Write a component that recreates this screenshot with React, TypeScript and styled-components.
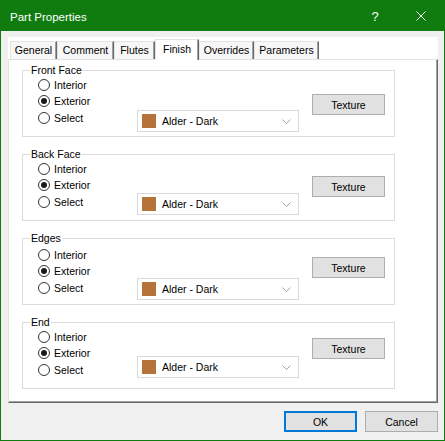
import React from "react";
import styled, { createGlobalStyle } from "styled-components";

const Global = createGlobalStyle`
  html, body { margin: 0; padding: 0; background: #f0f0f0; }
  * { box-sizing: border-box; }
  body { font-family: "Liberation Sans", Arial, sans-serif; }
`;

const GREEN = "#107c10";

const Window = styled.div`
  width: 445px;
  height: 441px;
  border: 1px solid ${GREEN};
  display: flex;
  flex-direction: column;
  background: #f0f0f0;
`;

const TitleBar = styled.div`
  height: 30px;
  background: ${GREEN};
  display: flex;
  align-items: center;
  padding-left: 9px;
  color: #fff;
`;

const TitleText = styled.div`
  flex: 1;
  font-size: 11.5px;
  line-height: 14px;
  margin-top: 1px;
`;

const TitleButton = styled.div`
  width: 46px;
  height: 30px;
  display: flex;
  align-items: center;
  justify-content: center;
  font-size: 13px;
  color: #fff;
`;

const Body = styled.div`
  flex: 1;
  padding: 6px 6px 0 7px;
  display: flex;
  flex-direction: column;
`;

const TabControl = styled.div`
  background: #fff;
  display: flex;
  flex-direction: column;
`;

const TabStrip = styled.div`
  height: 22px;
  padding-left: 2px;
  display: flex;
  align-items: flex-end;
`;

const Tab = styled.div<{ $w: number; $active?: boolean }>`
  width: ${(p) => p.$w}px;
  height: ${(p) => (p.$active ? 21 : 18)}px;
  margin-bottom: ${(p) => (p.$active ? -1 : 0)}px;
  position: relative;
  z-index: ${(p) => (p.$active ? 1 : 0)};
  background: ${(p) => (p.$active ? "#fff" : "#f7f7f7")};
  border-top: 1px solid #e3e3e3;
  border-left: 1px solid #e3e3e3;
  border-right: 1px solid #696969;
  box-shadow: inset -1px 0 0 #a0a0a0;
  font-size: 10.5px;
  color: #000;
  display: flex;
  justify-content: center;
  padding-top: ${(p) => (p.$active ? 3 : 2)}px;
  line-height: 13px;
  white-space: nowrap;
`;

const Panel = styled.div`
  height: 344px;
  border-top: 1px solid #e3e3e3;
  border-left: 1px solid #e3e3e3;
  border-right: 1px solid #696969;
  border-bottom: 1px solid #696969;
  box-shadow: inset -1px -1px 0 #a0a0a0;
  padding: 10px 0 0 13px;
  display: flex;
  flex-direction: column;
  gap: 17px;
`;

const Group = styled.div`
  position: relative;
  width: 373px;
  height: 67px;
  border: 1px solid #dcdcdc;
  display: flex;
`;

const Legend = styled.span`
  position: absolute;
  top: -7px;
  left: 7px;
  padding: 0 1px;
  background: #fff;
  font-size: 10.5px;
  line-height: 13px;
  color: #000;
`;

const RadioList = styled.div<{ $top: number }>`
  width: 114px;
  padding: ${(p) => p.$top}px 0 0 15px;
  display: flex;
  flex-direction: column;
`;

const RadioRow = styled.label`
  height: 16px;
  display: flex;
  align-items: center;
  gap: 4px;
  font-size: 10.5px;
  color: #000;
  &:last-child { margin-top: 1px; }
`;

const RadioCircle = styled.span<{ $checked?: boolean }>`
  width: 12px;
  height: 12px;
  border-radius: 50%;
  border: 1px solid #333;
  background: #fff;
  display: flex;
  align-items: center;
  justify-content: center;
  &::after {
    content: "";
    width: 6px;
    height: 6px;
    border-radius: 50%;
    background: ${(p) => (p.$checked ? "#1a1a1a" : "transparent")};
  }
`;

const ComboCol = styled.div<{ $top: number }>`
  padding-top: ${(p) => p.$top}px;
`;

const Combo = styled.div`
  width: 162px;
  height: 22px;
  border: 1px solid #d9d9d9;
  background: #fff;
  display: flex;
  align-items: center;
  padding: 0 7px 0 4px;
  gap: 6px;
  font-size: 10.5px;
  color: #000;
`;

const Swatch = styled.span<{ $color: string }>`
  width: 14px;
  height: 14px;
  background: ${(p) => p.$color};
  flex: none;
`;

const ComboText = styled.span`
  flex: 1;
`;

const ButtonCol = styled.div<{ $top: number }>`
  padding-top: ${(p) => p.$top}px;
  margin-left: 13px;
`;

const Button = styled.div<{ $default?: boolean }>`
  width: 73px;
  height: 21px;
  background: #e1e1e1;
  border: ${(p) => (p.$default ? "2px solid #0078d7" : "1px solid #adadad")};
  display: flex;
  align-items: center;
  justify-content: center;
  font-size: 10.5px;
  color: #000;
`;

const ButtonBar = styled.div`
  padding-top: 8px;
  display: flex;
  justify-content: flex-end;
  gap: 8px;
`;

const tabs = [
  { label: "General", w: 47 },
  { label: "Comment", w: 57 },
  { label: "Flutes", w: 41 },
  { label: "Finish", w: 44, active: true },
  { label: "Overrides", w: 55 },
  { label: "Parameters", w: 65 },
];

const groups = [
  { title: "Front Face", radio: 6, combo: 39, button: 23 },
  { title: "Back Face", radio: 6, combo: 38, button: 21 },
  { title: "Edges", radio: 8, combo: 39, button: 18 },
  { title: "End", radio: 6, combo: 33, button: 15 },
];

const Chevron = () => (
  <svg width="9" height="5" viewBox="0 0 9 5">
    <polyline points="0.5,0.5 4.5,4.5 8.5,0.5" fill="none" stroke="#a0a0a0" strokeWidth="1" />
  </svg>
);

const CloseIcon = () => (
  <svg width="10" height="10" viewBox="0 0 10 10">
    <path d="M0.5 0.5 L9.5 9.5 M9.5 0.5 L0.5 9.5" stroke="#fff" strokeWidth="1" fill="none" />
  </svg>
);

export default function App() {
  return (
    <>
      <Global />
      <Window>
        <TitleBar>
          <TitleText>Part Properties</TitleText>
          <TitleButton>?</TitleButton>
          <TitleButton>
            <CloseIcon />
          </TitleButton>
        </TitleBar>
        <Body>
          <TabControl>
            <TabStrip>
              {tabs.map((t) => (
                <Tab key={t.label} $w={t.w} $active={t.active}>
                  {t.label}
                </Tab>
              ))}
            </TabStrip>
            <Panel>
              {groups.map((g) => (
                <Group key={g.title}>
                  <Legend>{g.title}</Legend>
                  <RadioList $top={g.radio}>
                    <RadioRow>
                      <RadioCircle />
                      Interior
                    </RadioRow>
                    <RadioRow>
                      <RadioCircle $checked />
                      Exterior
                    </RadioRow>
                    <RadioRow>
                      <RadioCircle />
                      Select
                    </RadioRow>
                  </RadioList>
                  <ComboCol $top={g.combo}>
                    <Combo>
                      <Swatch $color="#b5733a" />
                      <ComboText>Alder - Dark</ComboText>
                      <Chevron />
                    </Combo>
                  </ComboCol>
                  <ButtonCol $top={g.button}>
                    <Button>Texture</Button>
                  </ButtonCol>
                </Group>
              ))}
            </Panel>
          </TabControl>
          <ButtonBar>
            <Button $default>OK</Button>
            <Button>Cancel</Button>
          </ButtonBar>
        </Body>
      </Window>
    </>
  );
}
